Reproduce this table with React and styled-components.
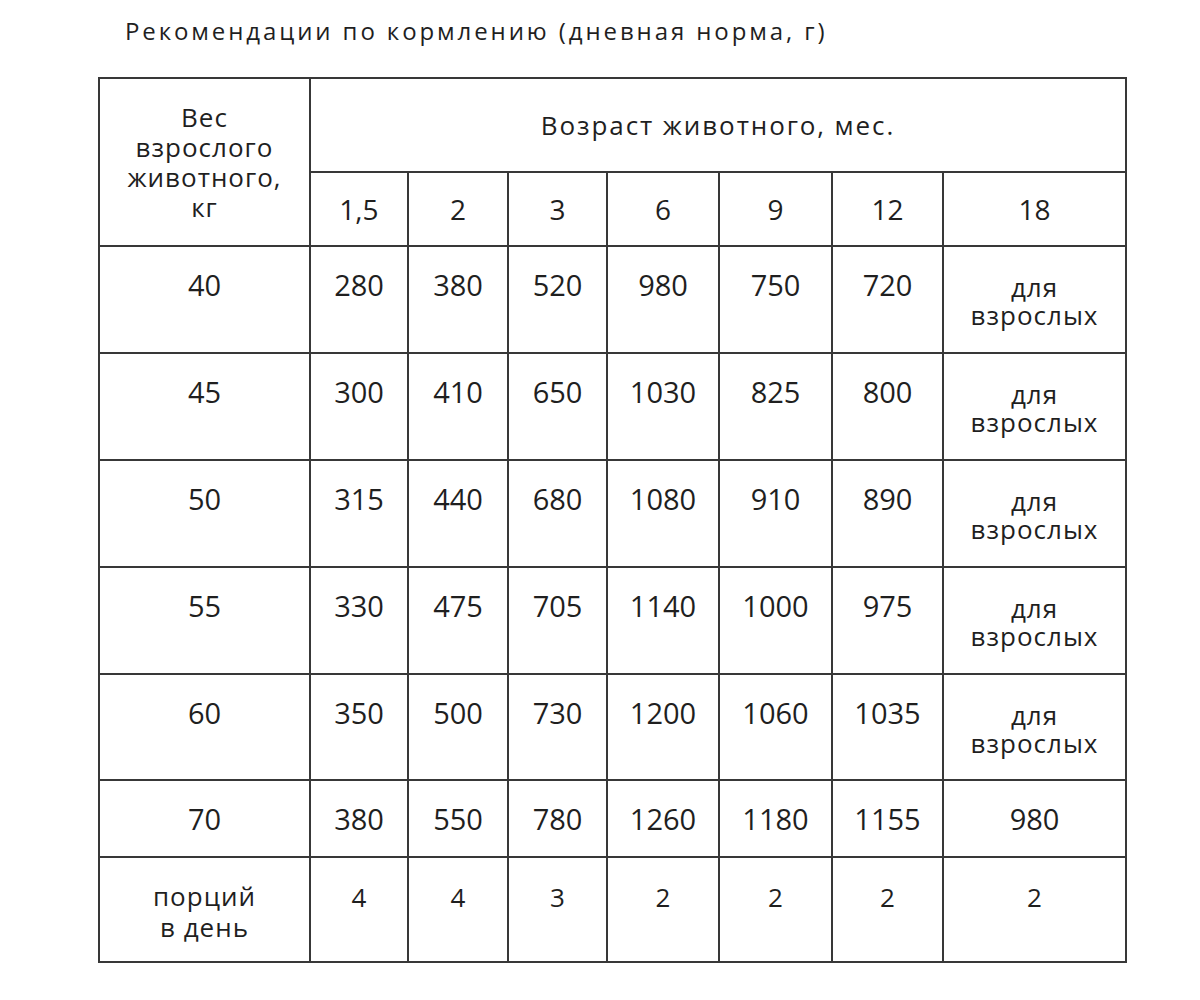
import React from 'react';
import styled, { createGlobalStyle } from 'styled-components';

const GlobalStyle = createGlobalStyle`
  body {
    margin: 0;
    background: #fff;
  }
`;

const ages = ['1,5', '2', '3', '6', '9', '12', '18'];
const colWidths = [211, 98, 100, 99, 112, 113, 111, 183];

const feeding = [
    { weight: '40', values: ['280', '380', '520', '980', '750', '720'], adult: null, height: 107 },
    { weight: '45', values: ['300', '410', '650', '1030', '825', '800'], adult: null, height: 107 },
    { weight: '50', values: ['315', '440', '680', '1080', '910', '890'], adult: null, height: 107 },
    { weight: '55', values: ['330', '475', '705', '1140', '1000', '975'], adult: null, height: 107 },
    { weight: '60', values: ['350', '500', '730', '1200', '1060', '1035'], adult: null, height: 106 },
    { weight: '70', values: ['380', '550', '780', '1260', '1180', '1155'], adult: '980', height: 77 }
];

const portions = ['4', '4', '3', '2', '2', '2', '2'];

const Page = styled.div`
  padding-top: 16px;
  font-family: "Open Sans", "Noto Sans", sans-serif;
  color: #1f1f1f;
`;

const Title = styled.h1`
  margin: 0 0 31px 125px;
  font-size: 24px;
  line-height: 30px;
  font-weight: 400;
  letter-spacing: 2.9px;
`;

const Table = styled.table`
  margin-left: 98px;
  width: 1027px;
  border-collapse: collapse;
  table-layout: fixed;
`;

const Row = styled.tr`
  height: ${(p) => p.$h}px;
`;

const Cell = styled.td`
  border: 2px solid #383838;
  text-align: center;
  vertical-align: ${(p) => (p.$middle ? 'middle' : 'top')};
  padding: ${(p) => (p.$middle ? '0 4px' : `${p.$top ?? 23}px 4px 0`)};
  font-size: ${(p) => p.$size ?? 29}px;
  line-height: ${(p) => p.$lh ?? 30}px;
  font-weight: 400;
  letter-spacing: ${(p) => p.$ls ?? 0}px;
`;

const Line = styled.span`
  display: block;
`;

const App = () => (
    <Page>
        <GlobalStyle />
        <Title>Рекомендации по кормлению (дневная норма, г)</Title>
        <Table>
            <colgroup>
                {colWidths.map((w, i) => (
                    <col key={i} style={{ width: w }} />
                ))}
            </colgroup>
            <tbody>
                <Row $h={94}>
                    <Cell rowSpan={2} $middle $size={26} $lh={30} $ls={1}>
                        <Line>Вес</Line>
                        <Line>взрослого</Line>
                        <Line>животного,</Line>
                        <Line>кг</Line>
                    </Cell>
                    <Cell colSpan={7} $middle $size={26} $ls={1.9}>
                        Возраст животного, мес.
                    </Cell>
                </Row>
                <Row $h={74}>
                    {ages.map((a) => (
                        <Cell key={a} $middle $size={28}>{a}</Cell>
                    ))}
                </Row>
                {feeding.map((r) => (
                    <Row key={r.weight} $h={r.height}>
                        <Cell>{r.weight}</Cell>
                        {r.values.map((v, i) => (
                            <Cell key={i}>{v}</Cell>
                        ))}
                        {r.adult ? (
                            <Cell>{r.adult}</Cell>
                        ) : (
                            <Cell $size={26} $lh={28} $top={26} $ls={1}>
                                <Line>для</Line>
                                <Line>взрослых</Line>
                            </Cell>
                        )}
                    </Row>
                ))}
                <Row $h={105}>
                    <Cell $size={26} $lh={31} $top={23} $ls={1}>
                        <Line>порций</Line>
                        <Line>в день</Line>
                    </Cell>
                    {portions.map((p, i) => (
                        <Cell key={i} $size={26} $top={24}>{p}</Cell>
                    ))}
                </Row>
            </tbody>
        </Table>
    </Page>
);

export default App;
